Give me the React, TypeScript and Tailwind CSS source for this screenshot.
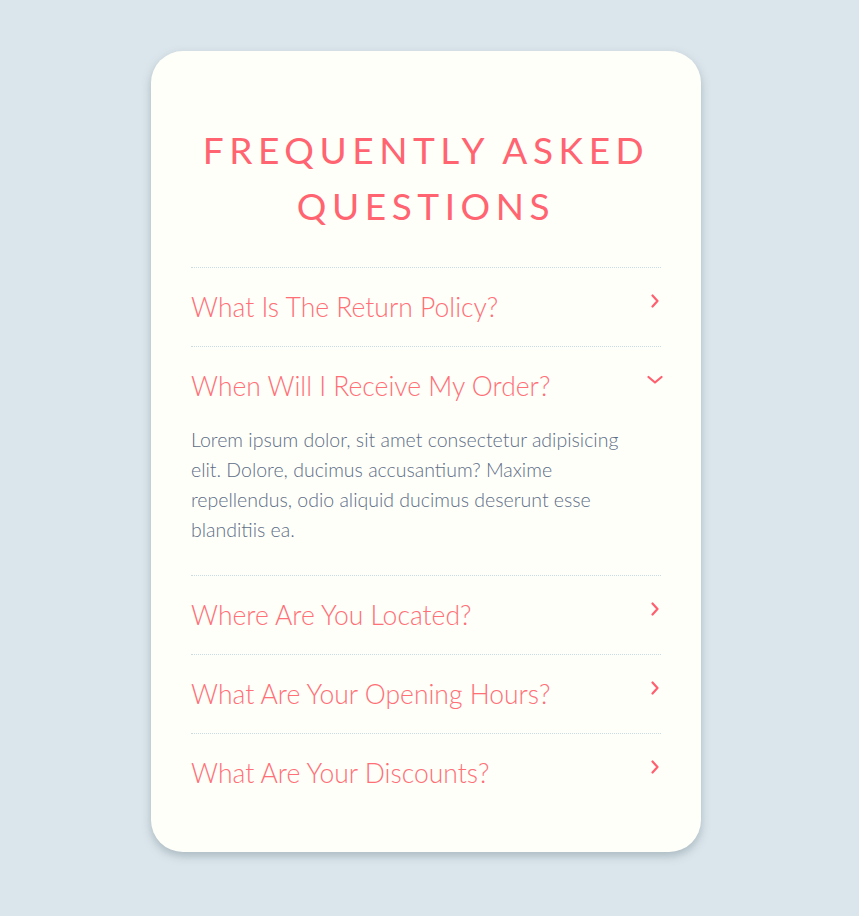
import React from "react";

const font = { fontFamily: '"Lato", "Open Sans", sans-serif' };

function ChevronRight() {
  return (
    <svg width="10" height="14" viewBox="0 0 10 14" fill="none" className="mt-[-12px] mr-[1px]">
      <path d="M2.5 1.5 L7.5 7 L2.5 12.5" stroke="#ff5f6f" strokeWidth="2.2" strokeLinecap="round" strokeLinejoin="round" />
    </svg>
  );
}

function ChevronDown() {
  return (
    <svg width="16" height="10" viewBox="0 0 16 10" fill="none" className="mt-[-12px] mr-[-2px]">
      <path d="M1.5 2 L8 7.5 L14.5 2" stroke="#ff5f6f" strokeWidth="2.2" strokeLinecap="round" strokeLinejoin="round" />
    </svg>
  );
}

const items = [
  { q: "What Is The Return Policy?", open: false },
  { q: "When Will I Receive My Order?", open: true },
  { q: "Where Are You Located?", open: false },
  { q: "What Are Your Opening Hours?", open: false },
  { q: "What Are Your Discounts?", open: false },
];

export default function App() {
  return (
    <div className="min-h-[916px] bg-[#dbe6ec] flex justify-center pt-[51px] pr-[7px]" style={font}>
      <div className="w-[550px] h-[801px] bg-[#fffffa] rounded-[32px] shadow-[0_4px_10px_rgba(80,100,110,0.35)] px-[40px] pt-[71px]">
        <h1 className="text-center text-[37px] leading-[56px] tracking-[0.15em] text-[#ff6470] font-normal uppercase pb-[33px]">
          Frequently Asked
          <br />
          Questions
        </h1>
        <div>
          {items.map((it) => (
            <div key={it.q} className="border-t border-dotted border-[#c9dbe3]">
              <div className="flex items-center justify-between py-[24px]">
                <span className="text-[26.5px] leading-[30px] text-[#ff6f76] font-light">{it.q}</span>
                {it.open ? <ChevronDown /> : <ChevronRight />}
              </div>
              {it.open && (
                <p className="text-[19.5px] leading-[30px] text-[#5d6d86] font-light w-[440px] pb-[30px]">
                  Lorem ipsum dolor, sit amet consectetur adipisicing elit. Dolore, ducimus accusantium? Maxime repellendus, odio aliquid ducimus deserunt esse blanditiis ea.
                </p>
              )}
            </div>
          ))}
        </div>
      </div>
    </div>
  );
}
